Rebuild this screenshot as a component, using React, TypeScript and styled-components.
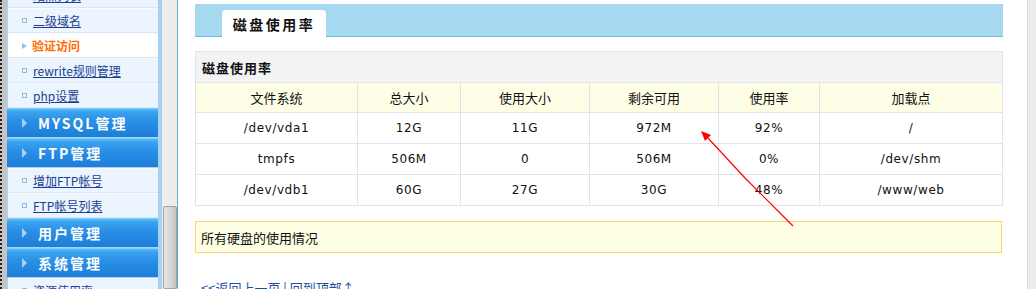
import styled, { createGlobalStyle } from 'styled-components';

const GlobalStyle = createGlobalStyle`
  html, body {
    margin: 0;
    padding: 0;
    background: #ffffff;
    overflow: hidden;
  }
  body {
    font-family: 'Noto Sans CJK SC', 'DejaVu Sans', sans-serif;
  }
`;

const cjk = `'Noto Sans CJK SC', 'DejaVu Sans', sans-serif`;
const latin = `'DejaVu Sans', 'Noto Sans CJK SC', sans-serif`;

type MenuItem =
  | { kind: 'head'; label: string }
  | { kind: 'link'; label: string; active?: boolean };

const menu: MenuItem[] = [
  { kind: 'link', label: '站点列表' },
  { kind: 'link', label: '二级域名' },
  { kind: 'link', label: '验证访问', active: true },
  { kind: 'link', label: 'rewrite规则管理' },
  { kind: 'link', label: 'php设置' },
  { kind: 'head', label: 'MYSQL管理' },
  { kind: 'head', label: 'FTP管理' },
  { kind: 'link', label: '增加FTP帐号' },
  { kind: 'link', label: 'FTP帐号列表' },
  { kind: 'head', label: '用户管理' },
  { kind: 'head', label: '系统管理' },
  { kind: 'link', label: '资源使用率' },
];

const columns = [
  { title: '文件系统', width: 162 },
  { title: '总大小', width: 103 },
  { title: '使用大小', width: 129 },
  { title: '剩余可用', width: 129 },
  { title: '使用率', width: 101 },
  { title: '加载点', width: 183 },
];

const disks = [
  ['/dev/vda1', '12G', '11G', '972M', '92%', '/'],
  ['tmpfs', '506M', '0', '506M', '0%', '/dev/shm'],
  ['/dev/vdb1', '60G', '27G', '30G', '48%', '/www/web'],
];

export default function App() {
  return (
    <>
      <GlobalStyle />
      <Page>
        <OtherWindow />
        <Sidebar>
          <MenuList>
            {menu.map((m, i) =>
              m.kind === 'head' ? (
                <MenuHead key={i}>
                  <HeadArrow />
                  <span>{m.label}</span>
                </MenuHead>
              ) : (
                <MenuRow key={i} $active={m.active}>
                  {m.active ? <ActiveArrow /> : <Bullet />}
                  <MenuLink $active={m.active}>{m.label}</MenuLink>
                </MenuRow>
              )
            )}
          </MenuList>
        </Sidebar>
        <FrameScroll>
          <Thumb />
        </FrameScroll>
        <Main>
          <TabBar>
            <Tab>磁盘使用率</Tab>
          </TabBar>
          <DiskTable>
            <colgroup>
              {columns.map((c) => (
                <col key={c.title} style={{ width: c.width }} />
              ))}
            </colgroup>
            <tbody>
              <tr>
                <TitleCell colSpan={6}>磁盘使用率</TitleCell>
              </tr>
              <tr>
                {columns.map((c) => (
                  <HeadCell key={c.title}>{c.title}</HeadCell>
                ))}
              </tr>
              {disks.map((row) => (
                <tr key={row[0]}>
                  {row.map((v, j) => (
                    <DataCell key={j}>{v}</DataCell>
                  ))}
                </tr>
              ))}
            </tbody>
          </DiskTable>
          <Note>所有硬盘的使用情况</Note>
          <BackLinks>
            <a>&lt;&lt;返回上一页</a> | <a>回到顶部↑</a>
          </BackLinks>
        </Main>
        <PageScroll />
        <Annotation width="1036" height="289" viewBox="0 0 1036 289">
          <polyline
            points="793,226 777,210 745,178 708,138"
            fill="none"
            stroke="#ff0000"
            strokeWidth="1.2"
          />
          <polygon points="701,131 711,135 705,141" fill="#ff0000" />
        </Annotation>
      </Page>
    </>
  );
}

const Page = styled.div`
  position: relative;
  display: flex;
  width: 1036px;
  height: 289px;
  overflow: hidden;
`;

const OtherWindow = styled.div`
  width: 5px;
  flex: none;
  background: #c4c4c4;
  border-left: 2px dotted #222;
`;

const Sidebar = styled.div`
  width: 151px;
  flex: none;
  background: #a9d3f5;
  border-right: 4px solid #a6d1f3;
  overflow: hidden;
`;

const MenuList = styled.div`
  display: flex;
  flex-direction: column;
  margin-top: -17px;
`;

const MenuHead = styled.div`
  flex: none;
  height: 30px;
  box-sizing: border-box;
  display: flex;
  align-items: center;
  gap: 11px;
  padding-left: 15px;
  background: linear-gradient(#55bdf8 0px, #3aa2ee 3px, #2a8fe6 12px, #1d7dd8 100%);
  border-top: 1px solid #7fd0ff;
  border-bottom: 1px solid #a9d3f5;
  color: #ffffff;
  font-family: ${cjk};
  font-size: 14px;
  font-weight: bold;
  letter-spacing: 2px;
`;

const HeadArrow = styled.i`
  width: 0;
  height: 0;
  border-top: 5px solid transparent;
  border-bottom: 5px solid transparent;
  border-left: 5px solid #a7d1f2;
`;

const MenuRow = styled.div<{ $active?: boolean }>`
  flex: none;
  height: 25px;
  box-sizing: border-box;
  margin-left: 1px;
  display: flex;
  align-items: center;
  padding-left: 14px;
  gap: 5px;
  background: ${(p) => (p.$active ? '#ffffff' : '#ecf4fd')};
  border-bottom: 1px solid #d9e8f8;
  border-top: 1px solid #f7fbff;
`;

const Bullet = styled.i`
  width: 3px;
  height: 3px;
  border: 1px solid #8fb9e2;
  margin-right: 1px;
`;

const ActiveArrow = styled.i`
  width: 0;
  height: 0;
  border-top: 3px solid transparent;
  border-bottom: 3px solid transparent;
  border-left: 5px solid #94c0ea;
`;

const MenuLink = styled.a<{ $active?: boolean }>`
  font-family: ${cjk};
  font-size: 12px;
  color: ${(p) => (p.$active ? '#ff6a00' : '#1b3f92')};
  font-weight: ${(p) => (p.$active ? 'bold' : 'normal')};
  text-decoration: ${(p) => (p.$active ? 'none' : 'underline')};
  white-space: nowrap;
`;

const FrameScroll = styled.div`
  width: 16px;
  flex: none;
  background: #ededed;
  border-right: 1px solid #5ea9dc;
  display: flex;
  flex-direction: column;
  justify-content: flex-end;
  padding-left: 1px;
  box-sizing: border-box;
`;

const Thumb = styled.div`
  height: 83px;
  width: 14px;
  box-sizing: border-box;
  border: 1px solid #a3a3a3;
  border-radius: 2px;
  background: linear-gradient(90deg, #e6e6e6, #d4d4d4 60%, #c2c2c2);
`;

const Main = styled.div`
  flex: 1;
  padding: 4px 24px 0 17px;
  box-sizing: border-box;
  display: flex;
  flex-direction: column;

  & > * {
    flex: none;
  }
`;

const TabBar = styled.div`
  height: 33px;
  box-sizing: border-box;
  background: #a6d9ef;
  border-bottom: 1px solid #6bbde6;
  display: flex;
  align-items: flex-end;
  padding-left: 27px;
`;

const Tab = styled.div`
  width: 104px;
  height: 27px;
  margin-bottom: -1px;
  background: #ffffff;
  border-radius: 4px 4px 0 0;
  display: flex;
  align-items: center;
  justify-content: center;
  font-family: ${cjk};
  font-size: 14px;
  font-weight: bold;
  letter-spacing: 2.5px;
  color: #111;
`;

const DiskTable = styled.table`
  margin-top: 14px;
  width: 807px;
  border-collapse: collapse;
  table-layout: fixed;
`;

const TitleCell = styled.td`
  height: 30px;
  padding: 0 0 0 6px;
  background: #f2f3f5;
  border: 1px solid #e1e3ea;
  font-family: ${cjk};
  font-size: 13px;
  font-weight: bold;
  letter-spacing: 1px;
  color: #111;
`;

const HeadCell = styled.td`
  height: 29px;
  padding: 0;
  text-align: center;
  background: #fefee7;
  border: 1px solid #e1e3ea;
  font-family: ${cjk};
  font-size: 13px;
  color: #111;
`;

const DataCell = styled.td`
  height: 30px;
  padding: 0;
  text-align: center;
  border: 1px solid #e1e3ea;
  font-family: ${latin};
  font-size: 12px;
  letter-spacing: 0.6px;
  color: #111;
`;

const Note = styled.div`
  margin-top: 15px;
  width: 807px;
  height: 32px;
  box-sizing: border-box;
  background: #fefee4;
  border: 1px solid #fad66c;
  padding-left: 5px;
  display: flex;
  align-items: center;
  font-family: ${cjk};
  font-size: 13px;
  color: #111;
`;

const BackLinks = styled.div`
  margin-top: 25px;
  padding-left: 6px;
  font-family: ${cjk};
  font-size: 13px;
  color: #1b4fa0;

  a {
    color: #1b4fa0;
    text-decoration: underline;
  }
`;

const PageScroll = styled.div`
  width: 8px;
  flex: none;
  background: #ececec;
  border-left: 1px solid #dcdcdc;
`;

const Annotation = styled.svg`
  position: absolute;
  left: 0;
  top: 0;
  pointer-events: none;
`;
